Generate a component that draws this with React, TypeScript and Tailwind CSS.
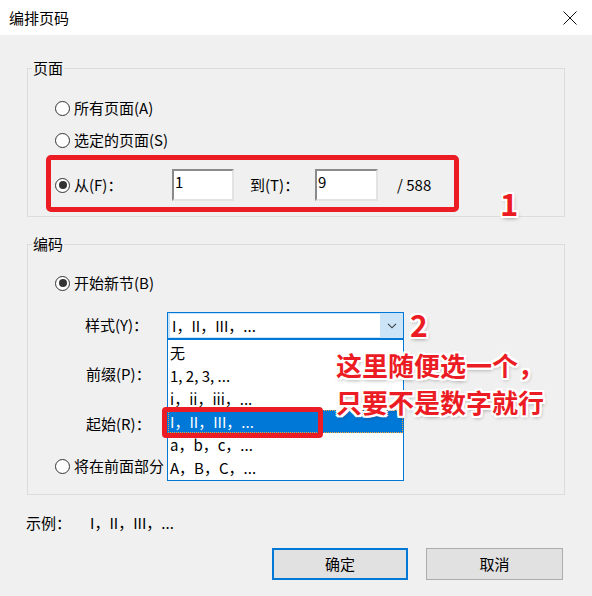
import React from 'react';

const roman = 'I，II，III，...';

const styleOptions = ['无', '1, 2, 3, ...', 'i，ii，iii，...', roman, 'a，b，c，...', 'A，B，C，...'];

// white halo used by the red callouts
const halo =
  '[text-shadow:-2px_-2px_0_#fff,2px_-2px_0_#fff,-2px_2px_0_#fff,2px_2px_0_#fff,0_-2px_0_#fff,0_2px_0_#fff,-2px_0_0_#fff,2px_0_0_#fff,1px_2px_4px_rgba(0,0,0,0.45)]';

function Radio({ checked, label }: { checked?: boolean; label: string }) {
  return (
    <div className="flex items-center whitespace-nowrap">
      <span className="flex h-[15px] w-[15px] shrink-0 items-center justify-center rounded-full border border-[#333333] bg-white">
        {checked && <span className="h-[8px] w-[8px] rounded-full bg-[#333333]" />}
      </span>
      <span className="ml-[4px]">{label}</span>
    </div>
  );
}

function SunkenBox({ value, width }: { value?: string; width: string }) {
  return (
    <div
      className={`h-[32px] ${width} border-t-2 border-l-2 border-r-2 border-b-2 border-t-[#8a8a8a] border-l-[#8a8a8a] border-r-[#e3e3e3] border-b-[#e3e3e3] bg-white pl-[1px] leading-[22px]`}
    >
      {value}
    </div>
  );
}

function StyleCombo() {
  return (
    <div className="relative h-[27px] w-[237px]">
      <div className="flex h-full border border-[#0078d7] bg-[#cce4f7]">
        <div className="my-[1px] ml-[2px] w-[210px] bg-white pl-[2px] leading-[23px]">{roman}</div>
        <div className="flex flex-1 items-center justify-center">
          <svg width="10" height="6" viewBox="0 0 10 6" fill="none">
            <path d="M1 0.8 L5 4.8 L9 0.8" stroke="#3c3c3c" strokeWidth="1.1" />
          </svg>
        </div>
      </div>

      {/* open dropdown list */}
      <ul className="absolute left-0 top-full z-10 w-full border border-[#0078d7] bg-white py-[1px]">
        {styleOptions.map((opt) => (
          <li
            key={opt}
            className={
              opt === roman
                ? 'h-[23px] border border-dotted border-[#f2a43a] bg-[#0078d7] px-[1px] leading-[21px] text-white'
                : 'h-[23px] px-[2px] leading-[23px]'
            }
          >
            {opt}
          </li>
        ))}
      </ul>
    </div>
  );
}

export default function App() {
  return (
    <div className="relative h-[596px] w-[592px] overflow-hidden bg-[#f0f0f0] font-['Noto_Sans_CJK_SC',sans-serif] text-[15px] text-black">
      {/* title bar */}
      <div className="flex h-[35px] items-center justify-between bg-white pl-[9px] pr-[15px]">
        <span className="leading-[20px]">编排页码</span>
        <svg width="14" height="14" viewBox="0 0 14 14" fill="none">
          <path d="M0.5 0.5 L13.5 13.5 M13.5 0.5 L0.5 13.5" stroke="#111" strokeWidth="1" />
        </svg>
      </div>

      <div className="px-[27px] pt-[23px]">
        {/* 页面 */}
        <fieldset className="min-w-0 border border-[#dcdcdc] pt-[14px] pb-[15px]">
          <legend className="ml-[4px] px-[1px] leading-[20px]">页面</legend>
          <div className="pl-[27px]">
            <div className="flex h-[32px] items-center">
              <Radio label="所有页面(A)" />
            </div>
            <div className="flex h-[32px] items-center">
              <Radio label="选定的页面(S)" />
            </div>
            <div className="mt-[13px] flex h-[32px] items-center">
              <div className="w-[117px]">
                <Radio checked label="从(F)：" />
              </div>
              <SunkenBox value="1" width="w-[62px]" />
              <div className="w-[81px] pl-[16px]">到(T)：</div>
              <SunkenBox value="9" width="w-[63px]" />
              <span className="ml-[19px]">/ 588</span>
            </div>
          </div>
        </fieldset>

        {/* 编码 */}
        <fieldset className="mt-[17px] min-w-0 border border-[#dcdcdc] pt-[13px] pb-[12px]">
          <legend className="ml-[4px] px-[1px] leading-[20px]">编码</legend>
          <div className="pl-[27px]">
            <div className="flex h-[32px] items-center">
              <Radio checked label="开始新节(B)" />
            </div>
          </div>
          <div className="mt-[13px] flex h-[27px] items-center pl-[57px]">
            <span className="w-[82px]">样式(Y)：</span>
            <StyleCombo />
          </div>
          <div className="mt-[22px] flex h-[27px] items-center pl-[58px]">
            <span className="w-[81px]">前缀(P)：</span>
            <SunkenBox width="w-[120px]" />
          </div>
          <div className="mt-[23px] flex h-[27px] items-center pl-[58px]">
            <span className="w-[81px]">起始(R)：</span>
            <SunkenBox width="w-[60px]" />
          </div>
          <div className="mt-[12px] flex h-[32px] items-center pl-[27px]">
            <Radio label="将在前面部分" />
          </div>
        </fieldset>

        <div className="-ml-px mt-[16px] flex h-[24px] items-center">
          <span className="w-[64px]">示例：</span>
          <span>{roman}</span>
        </div>

        <div className="mt-[13px] flex justify-end gap-[18px] pr-[2px]">
          <button className="h-[32px] w-[136px] border-2 border-[#0078d7] bg-[#e1e1e1]">确定</button>
          <button className="h-[32px] w-[137px] border border-[#adadad] bg-[#e1e1e1]">取消</button>
        </div>
      </div>

      {/* red callouts */}
      <div className="absolute left-[46px] top-[155px] z-30 h-[57px] w-[413px] rounded-[5px] border-[5px] border-[#ec1c24]" />
      <div className="absolute left-[162px] top-[407px] z-30 h-[31px] w-[161px] rounded-[4px] border-[5px] border-[#ec1c24]" />
      <span className={`absolute left-[500px] top-[187px] z-30 text-[31px] font-bold leading-[31px] text-[#ec1c24] ${halo}`}>
        1
      </span>
      <span className={`absolute left-[410px] top-[309px] z-30 text-[30px] font-bold leading-[30px] text-[#ec1c24] ${halo}`}>
        2
      </span>
      <div className={`absolute left-[336px] top-[346px] z-30 text-[26px] font-bold leading-[37px] text-[#ec1c24] ${halo}`}>
        <div>这里随便选一个，</div>
        <div>只要不是数字就行</div>
      </div>
    </div>
  );
}
